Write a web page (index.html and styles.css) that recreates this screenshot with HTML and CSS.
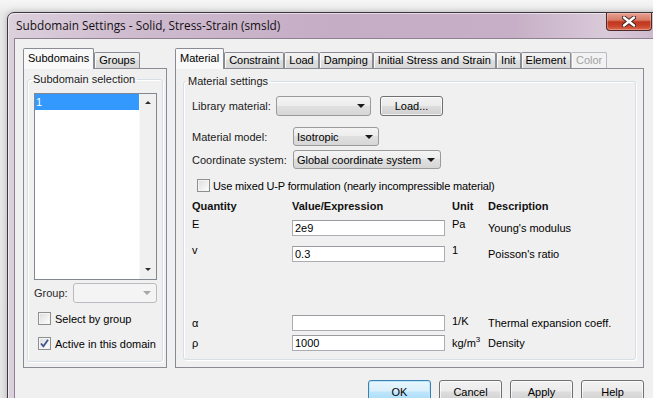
FILE: index.html
```html
<!DOCTYPE html>
<html>
<head>
<meta charset="utf-8">
<title>Subdomain Settings</title>
<link rel="stylesheet" href="styles.css">
</head>
<body>
<div class="window">
  <div class="titlebar">
    <span class="title">Subdomain Settings - Solid, Stress-Strain (smsld)</span>
    <span class="close">
      <svg width="14" height="11" viewBox="0 0 14 11">
        <path d="M2 1.5 L12 9.5 M12 1.5 L2 9.5" stroke="#3a2420" stroke-width="4.2" stroke-linecap="round"/>
        <path d="M2 1.5 L12 9.5 M12 1.5 L2 9.5" stroke="#ffffff" stroke-width="2.4" stroke-linecap="round"/>
      </svg>
    </span>
  </div>
  <div class="client">
    <div class="content">
      <div class="panes">
        <div class="tabctrl tc-left">
          <div class="tabstrip">
            <span class="tab sel">Subdomains</span>
            <span class="tab">Groups</span>
          </div>
          <div class="tabpage tp-left">
            <fieldset class="group">
              <legend>Subdomain selection</legend>
              <div class="listbox">
                <div class="items"><div class="item sel">1</div></div>
                <div class="vscroll"><span class="arr up"></span><span class="arr down"></span></div>
              </div>
              <div class="grouprow">
                <span class="lbl">Group:</span>
                <span class="combo disabled cb-group"><span class="caret"></span></span>
              </div>
              <label class="check ck-first"><span class="box"></span>Select by group</label>
              <label class="check ck-second"><span class="box">
                <svg width="11" height="11" viewBox="0 0 11 11"><path d="M2 5.5 L4.4 8.3 L9 1.8" fill="none" stroke="#3f5493" stroke-width="1.8"/></svg>
              </span>Active in this domain</label>
            </fieldset>
          </div>
        </div>

        <div class="tabctrl tc-right">
          <div class="tabstrip">
            <span class="tab sel">Material</span>
            <span class="tab">Constraint</span>
            <span class="tab">Load</span>
            <span class="tab">Damping</span>
            <span class="tab">Initial Stress and Strain</span>
            <span class="tab">Init</span>
            <span class="tab">Element</span>
            <span class="tab disabled">Color</span>
          </div>
          <div class="tabpage tp-right">
            <fieldset class="group">
              <legend>Material settings</legend>
              <div class="gbody">
                <div class="row r-lib">
                  <span class="rlabel w-lib">Library material:</span>
                  <span class="combo cb-lib"><span class="caret"></span></span>
                  <span class="btn btn-load">Load...</span>
                </div>
                <div class="row r-model">
                  <span class="rlabel w-model">Material model:</span>
                  <span class="combo cb-model"><span class="ctext">Isotropic</span><span class="caret"></span></span>
                </div>
                <div class="row r-coord">
                  <span class="rlabel w-model">Coordinate system:</span>
                  <span class="combo cb-coord"><span class="ctext">Global coordinate system</span><span class="caret"></span></span>
                </div>
                <label class="check ck-mixed"><span class="box"></span>Use mixed U-P formulation (nearly incompressible material)</label>

                <div class="trow thead">
                  <span class="th">Quantity</span>
                  <span class="th">Value/Expression</span>
                  <span class="th">Unit</span>
                  <span class="th">Description</span>
                </div>
                <div class="trow tr-e">
                  <span class="q top">E</span>
                  <span class="input">2e9</span>
                  <span class="u top">Pa</span>
                  <span class="d">Young's modulus</span>
                </div>
                <div class="trow tr-v">
                  <span class="q top">v</span>
                  <span class="input">0.3</span>
                  <span class="u top">1</span>
                  <span class="d">Poisson's ratio</span>
                </div>
                <div class="trow tr-alpha">
                  <span class="q">α</span>
                  <span class="input"></span>
                  <span class="u up1">1/K</span>
                  <span class="d">Thermal expansion coeff.</span>
                </div>
                <div class="trow tr-rho">
                  <span class="q">ρ</span>
                  <span class="input">1000</span>
                  <span class="u">kg/m<sup>3</sup></span>
                  <span class="d">Density</span>
                </div>
              </div>
            </fieldset>
          </div>
        </div>
      </div>

      <div class="buttons">
        <span class="btn btn-dlg default">OK</span>
        <span class="btn btn-dlg">Cancel</span>
        <span class="btn btn-dlg">Apply</span>
        <span class="btn btn-dlg">Help</span>
      </div>
    </div>
  </div>
</div>
</body>
</html>
```

FILE: styles.css
```css
* { box-sizing: border-box; }

html, body { margin: 0; padding: 0; }

body {
  width: 653px;
  height: 398px;
  overflow: hidden;
  background: linear-gradient(#f6f6f6, #e9e9e9 14px, #e6e6e6);
  font-family: "Liberation Sans", Arial, sans-serif;
  font-size: 11px;
  color: #000;
}

/* ---------- window frame ---------- */
.window {
  margin: 12px 0 0 7px;
  width: 653px;
  height: 420px;
  border: 1px solid #3d3640;
  border-radius: 7px 7px 0 0;
  background: linear-gradient(90deg, #dcd0dc 0%, #cfbccf 18%, #c5adc5 50%, #c7b0c7 78%, #d9cad9 92%, #cdb8cd 100%);
  box-shadow: inset 1px 1px 0 rgba(255,255,255,0.55), 0 0 6px rgba(0,0,0,0.25);
  display: flex;
  flex-direction: column;
}

.titlebar {
  height: 25px;
  display: flex;
  align-items: flex-start;
  padding-left: 8px;
}

.title {
  font-family: "Open Sans", "Noto Sans", sans-serif;
  font-size: 11.8px;
  line-height: 24px;
  color: #141014;
  flex: 1;
  white-space: nowrap;
}

.close {
  width: 46px;
  height: 18px;
  margin-right: 7px;
  border: 1px solid #4a2a24;
  border-top: 0;
  border-radius: 0 0 4px 4px;
  background: linear-gradient(#e6a294 0%, #d77a66 42%, #bf371e 52%, #c8432a 75%, #dc6a50 100%);
  box-shadow: inset 0 0 0 1px rgba(255,220,210,0.35);
  display: flex;
  align-items: center;
  justify-content: center;
}

/* ---------- client area ---------- */
.client {
  flex: 1;
  margin: 0 6px;
  background: #f0f0f0;
  border-top: 1px solid #8f8290;
  border-left: 1px solid #8f8290;
  padding: 9px 0 0 8px;
}

.content {
  width: 621px;
  display: flex;
  flex-direction: column;
}

.panes {
  display: flex;
  gap: 8px;
}

.tabctrl { display: flex; flex-direction: column; }
.tc-left { width: 144px; }
.tc-right { width: 469px; }

/* ---------- tabs ---------- */
.tabstrip {
  height: 20px;
  display: flex;
  align-items: flex-end;
  position: relative;
  z-index: 1;
}

.tab {
  height: 16px;
  line-height: 14px;
  padding: 0 4px;
  border: 1px solid #898c95;
  border-bottom: 0;
  border-radius: 2px 2px 0 0;
  background: linear-gradient(#f3f3f3, #ebebeb 50%, #dedede 50%, #d8d8d8);
  box-shadow: inset 1px 0 0 #fafafa;
  white-space: nowrap;
}

.tab.sel {
  height: 21px;
  margin-bottom: -1px;
  line-height: 18px;
  padding: 0 4px;
  background: #f9f9f9;
}

.tab.disabled {
  color: #a3a3a3;
  border-color: #b9bbc0;
  background: #f2f2f2;
}

.tabpage {
  height: 300px;
  border: 1px solid #898c95;
  background: #f0f0f0;
  display: flex;
  flex-direction: column;
}

.tp-left { padding: 4px 3px 5px 3px; }
.tp-right { padding: 6px 7px 7px 7px; }

/* ---------- group boxes ---------- */
.group {
  flex: 1;
  margin: 0;
  min-width: 0;
  border: 1px solid #d5dfe5;
  border-radius: 3px;
  box-shadow: inset 1px 1px 0 #ffffff, 1px 1px 0 #ffffff;
  padding: 0 5px 0 6px;
}

.group legend {
  line-height: 13px;
  padding: 0 2px;
  margin-left: -3px;
  color: #1a1a1a;
}

.tp-right .group { padding: 0; }
.tp-right .group legend { margin-left: 2px; }

.gbody {
  padding: 0 8px 0 8px;
  display: flex;
  flex-direction: column;
}

/* ---------- list box ---------- */
.listbox {
  margin-top: 7px;
  height: 187px;
  width: 123px;
  border: 1px solid #828790;
  background: #ffffff;
  display: flex;
}

.items { flex: 1; }

.item {
  height: 16px;
  line-height: 16px;
  padding-left: 1px;
}

.item.sel { background: #3399ff; color: #ffffff; }

.vscroll {
  width: 17px;
  background: #f0f0f0;
  border-left: 1px solid #f8f8f8;
  display: flex;
  flex-direction: column;
  justify-content: space-between;
  align-items: center;
  padding: 7px 0 8px;
}

.arr {
  width: 0;
  height: 0;
  border-left: 3px solid transparent;
  border-right: 3px solid transparent;
}
.arr.up { border-bottom: 3px solid #2e2e2e; }
.arr.down { border-top: 3px solid #2e2e2e; }

.grouprow {
  margin-top: 3px;
  height: 20px;
  width: 123px;
  display: flex;
  align-items: center;
}

.lbl { color: #2a2a2a; }

/* ---------- combos ---------- */
.combo {
  height: 20px;
  display: flex;
  align-items: center;
  border: 1px solid #9a9a9a;
  border-radius: 3px;
  background: linear-gradient(#f4f4f4 0%, #ececec 50%, #e0e0e0 50%, #d6d6d6 100%);
  padding: 0 5px 0 3px;
}

.ctext { white-space: nowrap; }

.caret {
  margin-left: auto;
  width: 0;
  height: 0;
  border-left: 4px solid transparent;
  border-right: 4px solid transparent;
  border-top: 4px solid #1a1a1a;
}

.combo.disabled {
  border-color: #b8bcc0;
  background: #f4f4f4;
}
.combo.disabled .caret { border-top-color: #a6a6a6; }

.cb-group { width: 84px; margin-left: auto; }
.cb-lib { width: 95px; }
.cb-model { width: 86px; height: 19px; }
.cb-coord { width: 148px; height: 19px; }

/* ---------- check boxes ---------- */
.check {
  display: flex;
  align-items: center;
  gap: 4px;
  height: 13px;
  white-space: nowrap;
}

.box {
  width: 13px;
  height: 13px;
  flex: none;
  border: 1px solid #8e8f8f;
  background: linear-gradient(135deg, #dcdcdc, #ffffff);
  box-shadow: inset 0 0 0 1px #f4f4f4;
  display: flex;
  align-items: center;
  justify-content: center;
}

.ck-first { margin: 9px 0 0 4px; }
.ck-second { margin: 12px 0 0 4px; }
.ck-mixed { margin: 10px 0 0 5px; gap: 3px; letter-spacing: -0.15px; }

/* ---------- right rows ---------- */
.row {
  display: flex;
  align-items: center;
}

.rlabel { white-space: nowrap; color: #1a1a1a; }
.w-lib { width: 84px; }
.w-model { width: 101px; }

.r-lib { margin-top: 8px; }
.r-model { margin-top: 11px; }
.r-coord { margin-top: 4px; }

.btn {
  height: 20px;
  display: flex;
  align-items: center;
  justify-content: center;
  border: 1px solid #707070;
  border-radius: 3px;
  background: linear-gradient(#f2f2f2 0%, #ebebeb 48%, #dddddd 52%, #cfcfcf 100%);
  box-shadow: inset 0 0 0 1px rgba(255,255,255,0.7);
}

.btn-load { width: 63px; margin-left: 9px; }

/* ---------- table ---------- */
.trow {
  display: grid;
  grid-template-columns: 100px 160px 36px 1fr;
  align-items: center;
  height: 16px;
}

.thead { height: 13px; margin-top: 8px; }
.tr-e { margin-top: 7px; }
.tr-v { margin-top: 10px; }
.tr-alpha { margin-top: 53px; }
.tr-rho { margin-top: 4px; }

.th {
  font-weight: bold;
  line-height: 13px;
  color: #101010;
}

.q, .u, .d { line-height: 13px; white-space: nowrap; }
.top { align-self: start; margin-top: -2px; }
.up1 { margin-top: -3px; }

.input {
  display: block;
  width: 153px;
  height: 16px;
  line-height: 14px;
  border: 1px solid #abadb3;
  border-top-color: #9a9ca2;
  background: #ffffff;
  padding-left: 2px;
}

sup { font-size: 8px; vertical-align: 5px; line-height: 0; }

/* ---------- dialog buttons ---------- */
.buttons {
  margin-top: 12px;
  display: flex;
  justify-content: flex-end;
  gap: 8px;
}

.btn-dlg { width: 63px; height: 23px; }

.btn.default {
  border-color: #3c7fb1;
  background: linear-gradient(#eaf6fd 0%, #d9f0fc 48%, #bee6fd 52%, #a7d9f5 100%);
  box-shadow: inset 0 0 0 1px #b8e8fc;
}
```
